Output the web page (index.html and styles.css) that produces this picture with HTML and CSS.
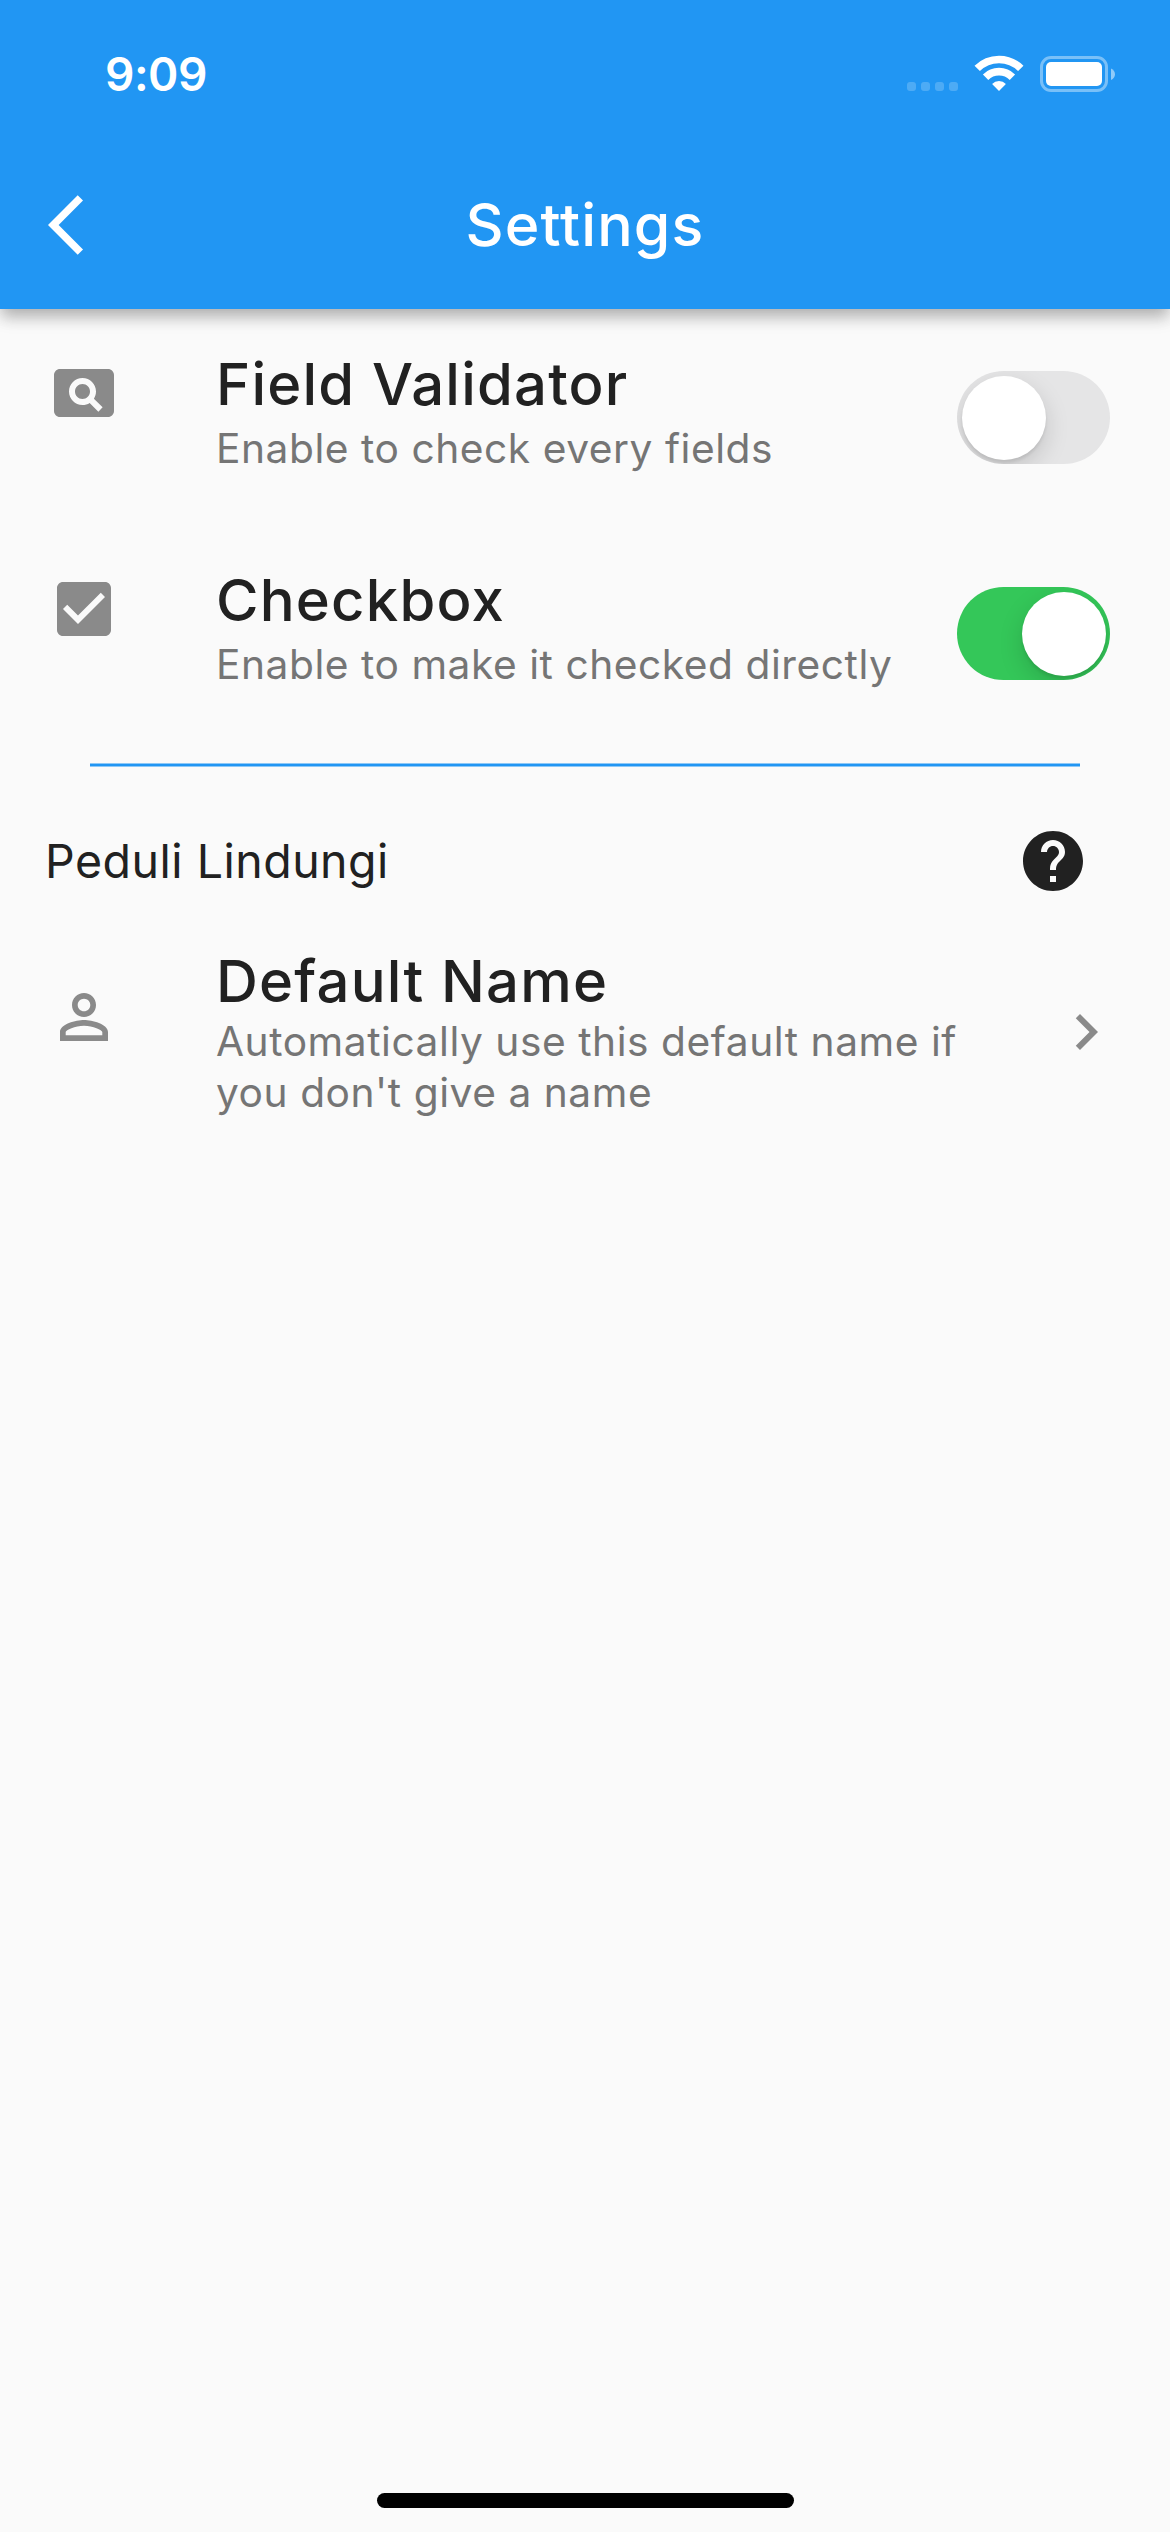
FILE: index.html
```html
<!DOCTYPE html>
<html lang="en">
<head>
<meta charset="utf-8">
<title>Settings</title>
<link rel="stylesheet" href="styles.css">
</head>
<body>
<header class="app-header">
  <div class="status-bar">
    <span class="clock">9:09</span>
    <div class="status-icons">
      <svg class="signal" width="51" height="36" viewBox="0 0 51 36"><rect x="0" y="27" width="9" height="9" rx="3"/><rect x="14" y="27" width="9" height="9" rx="3"/><rect x="28" y="27" width="9" height="9" rx="3"/><rect x="42" y="27" width="9" height="9" rx="3"/></svg>
      <svg class="wifi" width="50" height="36" viewBox="0 0 50 36"><g fill="none" stroke="#fff" stroke-width="7.6"><path d="M3.2 13.4a31 31 0 0 1 43.6 0"/><path d="M11.6 22.2a19 19 0 0 1 26.8 0"/></g><path d="M25 36l-6.900-7.100a9.700 9.700 0 0 1 13.800 0z" fill="#fff"/></svg>
      <svg class="battery" width="75" height="36" viewBox="0 0 75 36"><rect x="1.500" y="1.500" width="65" height="33" rx="9.500" fill="none" stroke="#fff" stroke-opacity=".4" stroke-width="3"/><rect x="6" y="6" width="56" height="24" rx="5" fill="#fff"/><path d="M71 12.500c5.300 2.200 5.300 9.300 0 11.500z" fill="#fff" fill-opacity=".5"/></svg>
    </div>
  </div>
  <div class="nav-bar">
    <svg class="icon" viewBox="0 0 24 24"><path d="M11.670 3.870L9.900 2.100 0 12l9.900 9.900 1.770-1.770L3.540 12z"/></svg>
    <h1 class="nav-title">Settings</h1>
    <span class="nav-spacer"></span>
  </div>
</header>
<main class="settings">
  <section class="row">
    <svg class="icon" viewBox="0 0 24 24"><path d="M11.500 9C10.120 9 9 10.120 9 11.500s1.120 2.500 2.500 2.500 2.500-1.120 2.500-2.500S12.880 9 11.500 9zM20 4H4c-1.100 0-2 .9-2 2v12c0 1.100.9 2 2 2h16c1.100 0 2-.9 2-2V6c0-1.100-.9-2-2-2zm-3.210 14.210l-2.910-2.910c-.69.44-1.510.7-2.390.7C9.010 16 7 13.990 7 11.500S9.010 7 11.500 7 16 9.010 16 11.500c0 .88-.26 1.690-.7 2.390l2.910 2.900-1.420 1.420z"/></svg>
    <div class="row-text">
      <h2 class="row-title">Field Validator</h2>
      <p class="row-subtitle">Enable to check every fields</p>
    </div>
    <span class="switch"><span class="thumb"></span></span>
  </section>
  <section class="row">
    <svg class="icon" viewBox="0 0 24 24"><path d="M19 3H5c-1.110 0-2 .9-2 2v14c0 1.100.89 2 2 2h14c1.110 0 2-.9 2-2V5c0-1.100-.89-2-2-2zm-9 14l-5-5 1.410-1.410L10 14.170l7.590-7.590L19 8l-9 9z"/></svg>
    <div class="row-text">
      <h2 class="row-title">Checkbox</h2>
      <p class="row-subtitle">Enable to make it checked directly</p>
    </div>
    <span class="switch switch-on"><span class="thumb"></span></span>
  </section>
  <div class="divider"><svg width="990" height="4" viewBox="0 0 990 4"><rect y=".5" width="990" height="3"/></svg></div>
  <div class="group-header">
    <span class="group-title">Peduli Lindungi</span>
    <svg class="icon" viewBox="0 0 24 24"><path d="M12 2C6.480 2 2 6.480 2 12s4.480 10 10 10 10-4.480 10-10S17.520 2 12 2zm1 17h-2v-2h2v2zm2.070-7.750l-.9.920C13.450 12.900 13 13.500 13 15h-2v-.5c0-1.100.45-2.100 1.170-2.830l1.240-1.260c.37-.36.59-.86.59-1.410 0-1.100-.9-2-2-2s-2 .9-2 2H8c0-2.210 1.790-4 4-4s4 1.790 4 4c0 .88-.36 1.680-.93 2.250z"/></svg>
  </div>
  <section class="row row-link">
    <svg class="icon" viewBox="0 0 24 24"><path d="M12 5.900c1.160 0 2.100.94 2.100 2.100s-.94 2.100-2.100 2.100S9.900 9.160 9.900 8s.94-2.100 2.100-2.100m0 9c2.970 0 6.100 1.460 6.100 2.100v1.100H5.900V17c0-.64 3.130-2.100 6.100-2.100M12 4C9.790 4 8 5.790 8 8s1.790 4 4 4 4-1.790 4-4-1.790-4-4-4zm0 9c-2.670 0-8 1.340-8 4v3h16v-3c0-2.660-5.330-4-8-4z"/></svg>
    <div class="row-text">
      <h2 class="row-title">Default Name</h2>
      <p class="row-subtitle">Automatically use this default name if<br>you don't give a name</p>
    </div>
    <svg class="icon chevron" viewBox="0 0 24 24"><path d="M10 6L8.590 7.410 13.170 12l-4.580 4.590L10 18l6-6z"/></svg>
  </section>
</main>
<footer class="home-area"><span class="home-indicator"></span></footer>
</body>
</html>
```
FILE: styles.css
```css
* { box-sizing: border-box; margin: 0; padding: 0; }
body {
  display: flex;
  flex-direction: column;
  width: 1170px;
  height: 2532px;
  overflow: hidden;
  background: #fafafa;
  color: #212121;
  font-family: Inter, "Liberation Sans", sans-serif;
}
svg { display: block; flex: none; }
.icon { width: 72px; height: 72px; fill: currentColor; }

.app-header {
  height: 309px;
  background: #2196f3;
  color: #fff;
  box-shadow: 0 8px 14px -2px rgba(0, 0, 0, .22), 0 12px 15px rgba(0, 0, 0, .08), 0 3px 24px rgba(0, 0, 0, .05);
}
.status-bar {
  display: flex;
  justify-content: space-between;
  height: 141px;
  padding: 44px 55px 0 105px;
}
.clock { font-size: 46px; line-height: 60px; font-weight: 600; letter-spacing: -.5px; }
.status-icons { display: flex; padding-top: 11px; }
.signal { fill: rgba(255, 255, 255, .2); }
.wifi { margin-left: 16px; }
.battery { margin-left: 16px; margin-top: 1px; }
.nav-bar {
  display: flex;
  align-items: center;
  height: 168px;
  padding: 0 48px;
}
.nav-title {
  flex: 1;
  text-align: center;
  font-size: 59px;
  line-height: 72px;
  font-weight: 550;
  letter-spacing: 1.1px;
}
.nav-spacer { width: 72px; }

.settings { flex: 1; }
.row {
  display: flex;
  align-items: flex-start;
  height: 216px;
  padding: 0 60px 0 48px;
}
.row .icon { margin-top: 48px; color: #8a8a8a; }
.row-text { flex: 1; margin-left: 96px; padding-top: 39px; white-space: nowrap; }
.row-title { font-size: 58px; line-height: 72px; font-weight: 480; letter-spacing: 1.2px; }
.row-subtitle { margin-top: 4px; font-size: 40.700px; line-height: 50px; letter-spacing: .54px; color: #757575; }
.switch {
  display: flex;
  width: 153px;
  height: 93px;
  margin-top: 62px;
  padding: 4.500px;
  overflow: hidden;
  border-radius: 47px;
  background: #e5e5e6;
}
.switch-on { justify-content: flex-end; background: #34c759; }
.thumb {
  width: 84px;
  height: 84px;
  border-radius: 50%;
  background: #fff;
  box-shadow: 0 9px 24px rgba(0, 0, 0, .15), 0 3px 3px rgba(0, 0, 0, .08);
}
.divider { display: flex; align-items: center; justify-content: center; height: 48px; fill: #2196f3; }
.group-header {
  display: flex;
  align-items: center;
  justify-content: space-between;
  height: 144px;
  padding: 0 81px 0 45px;
}
.group-title { font-size: 46.500px; line-height: 56px; letter-spacing: .5px; }
.row-link { height: 198px; padding-right: 48px; }
.row-link .row-text { padding-top: 12px; }
.row-link .row-subtitle { margin-top: -1px; line-height: 51px; }
.row-link .chevron { margin-top: 63px; }

.home-area { display: flex; justify-content: center; align-items: flex-end; height: 39px; padding-bottom: 24px; }
.home-indicator { width: 417px; height: 15px; border-radius: 8px; background: #000; }
```
